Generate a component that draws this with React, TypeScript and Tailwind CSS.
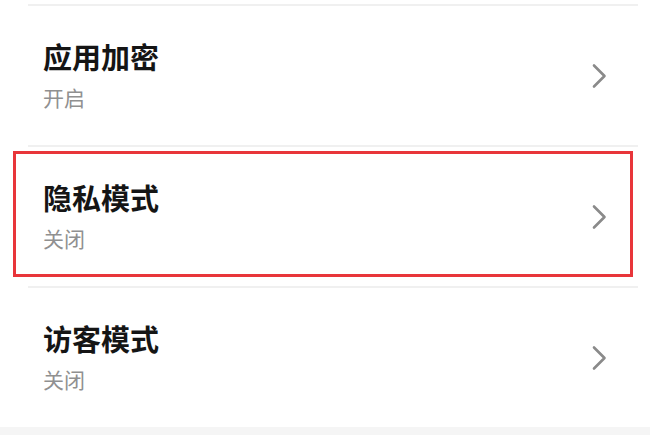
const items = [
  { title: '应用加密', status: '开启', marked: false },
  { title: '隐私模式', status: '关闭', marked: true },
  { title: '访客模式', status: '关闭', marked: false },
]

function Chevron() {
  return (
    <svg width="16" height="26" viewBox="0 0 16 26" fill="none" className="shrink-0">
      <polyline points="3,2.5 13.5,13 3,23.5" stroke="#8a8a8a" strokeWidth="2.6" strokeLinecap="round" strokeLinejoin="round" />
    </svg>
  )
}

function Divider() {
  return <div className="ml-[28px] w-[610px] h-[2px] bg-[#f0f0f0]" />
}

function Row({ title, status, marked }: { title: string; status: string; marked: boolean }) {
  return (
    <div className="relative h-[139px] flex items-center justify-between pl-[43px] pr-[43px]">
      <div className="flex flex-col -mt-[2px]">
        <span className="text-[29px] leading-[32px] font-bold text-[#151515]">{title}</span>
        <span className="mt-[13px] text-[21px] leading-[24px] text-[#909090]">{status}</span>
      </div>
      <Chevron />
      {/* red highlight annotation */}
      {marked && (
        <div className="absolute left-[13px] top-[4px] w-[620px] h-[126px] border-[3px] border-[#e8353a]" />
      )}
    </div>
  )
}

export default function App() {
  return (
    <div
      className="w-[650px] h-[435px] bg-white flex flex-col pt-[4px] overflow-hidden"
      style={{ fontFamily: '"Noto Sans CJK SC", "Noto Sans", sans-serif' }}
    >
      {items.map((it) => (
        <div key={it.title}>
          <Divider />
          <Row {...it} />
        </div>
      ))}
      <div className="flex-1 bg-[#f5f5f5]" />
    </div>
  )
}
